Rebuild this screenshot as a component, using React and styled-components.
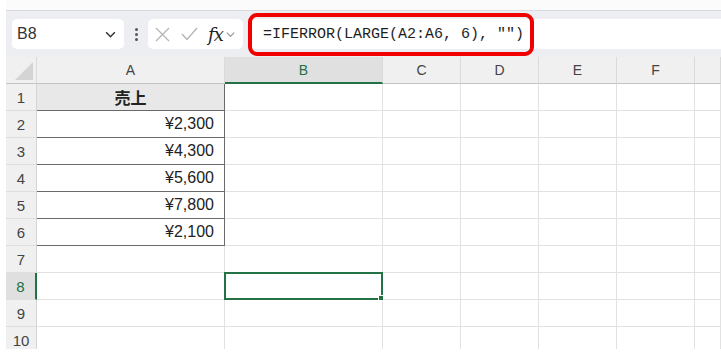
import React from "react";
import styled, { createGlobalStyle } from "styled-components";

const GlobalStyle = createGlobalStyle`
  html, body { margin: 0; padding: 0; background: #ffffff; }
  body { font-family: "Liberation Sans", "Noto Sans CJK JP", sans-serif; }
`;

const COLUMNS = ["A", "B", "C", "D", "E", "F", ""];
const SALES = ["¥2,300", "¥4,300", "¥5,600", "¥7,800", "¥2,100"];
const ROWS = 10;
const SELECTED = { row: 8, col: "B" };

const Page = styled.div`
  width: 721px;
  height: 357px;
  padding-left: 6px;
  box-sizing: border-box;
  overflow: hidden;
  background: #ffffff;
`;

const TopStrip = styled.div`
  height: 10px;
  background: #fbfbfb;
  border-bottom: 1px solid #d9dadd;
`;

const Toolbar = styled.div`
  position: relative;
  display: flex;
  align-items: center;
  height: 46px;
  padding-left: 6px;
  background: #eceef2;
`;

const NameBox = styled.div`
  display: flex;
  align-items: center;
  justify-content: space-between;
  width: 112px;
  height: 30px;
  padding: 0 7px 0 5px;
  box-sizing: border-box;
  background: #ffffff;
  border-radius: 5px;
  font-size: 16px;
  color: #333;
`;

const Dots = styled.div`
  display: flex;
  flex-direction: column;
  align-items: center;
  gap: 2px;
  width: 24px;
  span {
    width: 3px;
    height: 3px;
    border-radius: 50%;
    background: #555;
  }
`;

const FnBox = styled.div`
  display: flex;
  align-items: center;
  width: 95px;
  height: 30px;
  padding-left: 7px;
  box-sizing: border-box;
  background: #ffffff;
  border-radius: 5px;
`;

const Fx = styled.span`
  margin: 0 2px 0 10px;
  font-family: "DejaVu Serif", "Liberation Serif", serif;
  font-style: italic;
  font-size: 18px;
  color: #222;
  letter-spacing: -1px;
`;

const FormulaBar = styled.div`
  flex: 1;
  display: flex;
  align-items: center;
  height: 30px;
  margin-left: 7px;
  padding-left: 13px;
  background: #ffffff;
  border-radius: 5px 0 0 5px;
  font-family: "Liberation Mono", "DejaVu Sans Mono", monospace;
  font-size: 15px;
  color: #1e1e1e;
  white-space: pre;
`;

const Highlight = styled.div`
  position: absolute;
  left: 242px;
  top: 2px;
  width: 286px;
  height: 43px;
  box-sizing: border-box;
  border: 4px solid #f00000;
  border-radius: 9px;
  pointer-events: none;
`;

const Sheet = styled.div`
  display: grid;
  grid-template-columns: 31px 188px 158px 78px 78px 78px 78px 26px;
  grid-auto-rows: 27px;
  height: 292px;
  overflow: hidden;
  font-size: 14px;
`;

const Corner = styled.div`
  position: relative;
  background: #f0f0f0;
  border-right: 1px solid #dadada;
  border-bottom: 1px solid #c4c4c4;
  box-sizing: border-box;
  &::after {
    content: "";
    position: absolute;
    right: 3px;
    bottom: 3px;
    border-style: solid;
    border-width: 0 0 18px 18px;
    border-color: transparent transparent #d4d4d4 transparent;
  }
`;

const ColHead = styled.div`
  display: flex;
  align-items: center;
  justify-content: center;
  box-sizing: border-box;
  background: ${(p) => (p.$active ? "#e0e0e0" : "#f0f0f0")};
  border-right: 1px solid #dadada;
  border-bottom: ${(p) => (p.$active ? "2px solid #217346" : "1px solid #c4c4c4")};
  color: ${(p) => (p.$active ? "#217346" : "#444")};
  padding-top: ${(p) => (p.$active ? "1px" : "0")};
`;

const RowHead = styled.div`
  display: flex;
  align-items: center;
  justify-content: center;
  box-sizing: border-box;
  background: ${(p) => (p.$active ? "#e0e0e0" : "#f0f0f0")};
  border-right: ${(p) => (p.$active ? "2px solid #217346" : "1px solid #d4d4d4")};
  border-bottom: 1px solid #dedede;
  color: ${(p) => (p.$active ? "#217346" : "#444")};
  font-size: 15px;
`;

const Cell = styled.div`
  position: relative;
  display: flex;
  align-items: center;
  justify-content: ${(p) => (p.$head ? "center" : "flex-end")};
  padding-right: 10px;
  box-sizing: border-box;
  background: ${(p) => (p.$head ? "#e8e8e8" : "#ffffff")};
  border-right: 1px solid ${(p) => (p.$boxed ? "#6a6a6a" : "#e2e2e2")};
  border-bottom: 1px solid ${(p) => (p.$boxed ? "#6a6a6a" : "#e2e2e2")};
  font-size: 16px;
  font-weight: ${(p) => (p.$head ? "bold" : "normal")};
  color: #222;
  ${(p) => p.$head && `padding-right: 0; font-family: "Noto Sans CJK JP", sans-serif;`}
`;

const Selection = styled.div`
  position: absolute;
  left: -1px;
  top: -1px;
  right: -1px;
  bottom: -1px;
  border: 2px solid #217346;
  pointer-events: none;
  &::after {
    content: "";
    position: absolute;
    right: -4px;
    bottom: -4px;
    width: 5px;
    height: 5px;
    background: #217346;
    border: 1px solid #ffffff;
  }
`;

const Chevron = ({ size = 12, color = "#444" }) => (
  <svg width={size} height={size} viewBox="0 0 12 12">
    <path d="M2 4 L6 8 L10 4" fill="none" stroke={color} strokeWidth="1.4" />
  </svg>
);

const CrossIcon = () => (
  <svg width="15" height="15" viewBox="0 0 15 15">
    <path d="M1 1 L14 14 M14 1 L1 14" stroke="#b4b4b4" strokeWidth="1.3" fill="none" />
  </svg>
);

const CheckIcon = () => (
  <svg width="17" height="14" viewBox="0 0 17 14" style={{ marginLeft: 11 }}>
    <path d="M1 7 L6 12.5 L16 1" stroke="#b4b4b4" strokeWidth="1.3" fill="none" />
  </svg>
);

const cellFor = (row, col) => {
  if (col === "A" && row === 1) return { head: true, boxed: true, text: "売上" };
  if (col === "A" && row >= 2 && row <= 6) return { boxed: true, text: SALES[row - 2] };
  return { text: "" };
};

const App = () => {
  const rows = Array.from({ length: ROWS }, (_, i) => i + 1);

  return (
    <Page>
      <GlobalStyle />
      <TopStrip />
      <Toolbar>
        <NameBox>
          <span>B8</span>
          <Chevron size={13} color="#333" />
        </NameBox>
        <Dots>
          <span />
          <span />
          <span />
        </Dots>
        <FnBox>
          <CrossIcon />
          <CheckIcon />
          <Fx>fx</Fx>
          <Chevron size={11} color="#999" />
        </FnBox>
        <FormulaBar>=IFERROR(LARGE(A2:A6, 6), "")</FormulaBar>
        <Highlight />
      </Toolbar>
      <Sheet>
        <Corner />
        {COLUMNS.map((c, i) => (
          <ColHead key={i} $active={c === SELECTED.col}>
            {c}
          </ColHead>
        ))}
        {rows.map((r) => (
          <React.Fragment key={r}>
            <RowHead $active={r === SELECTED.row}>{r}</RowHead>
            {COLUMNS.map((c, i) => {
              const cell = cellFor(r, c);
              return (
                <Cell key={i} $head={cell.head} $boxed={cell.boxed}>
                  {cell.text}
                  {r === SELECTED.row && c === SELECTED.col && <Selection />}
                </Cell>
              );
            })}
          </React.Fragment>
        ))}
      </Sheet>
    </Page>
  );
};

export default App;
